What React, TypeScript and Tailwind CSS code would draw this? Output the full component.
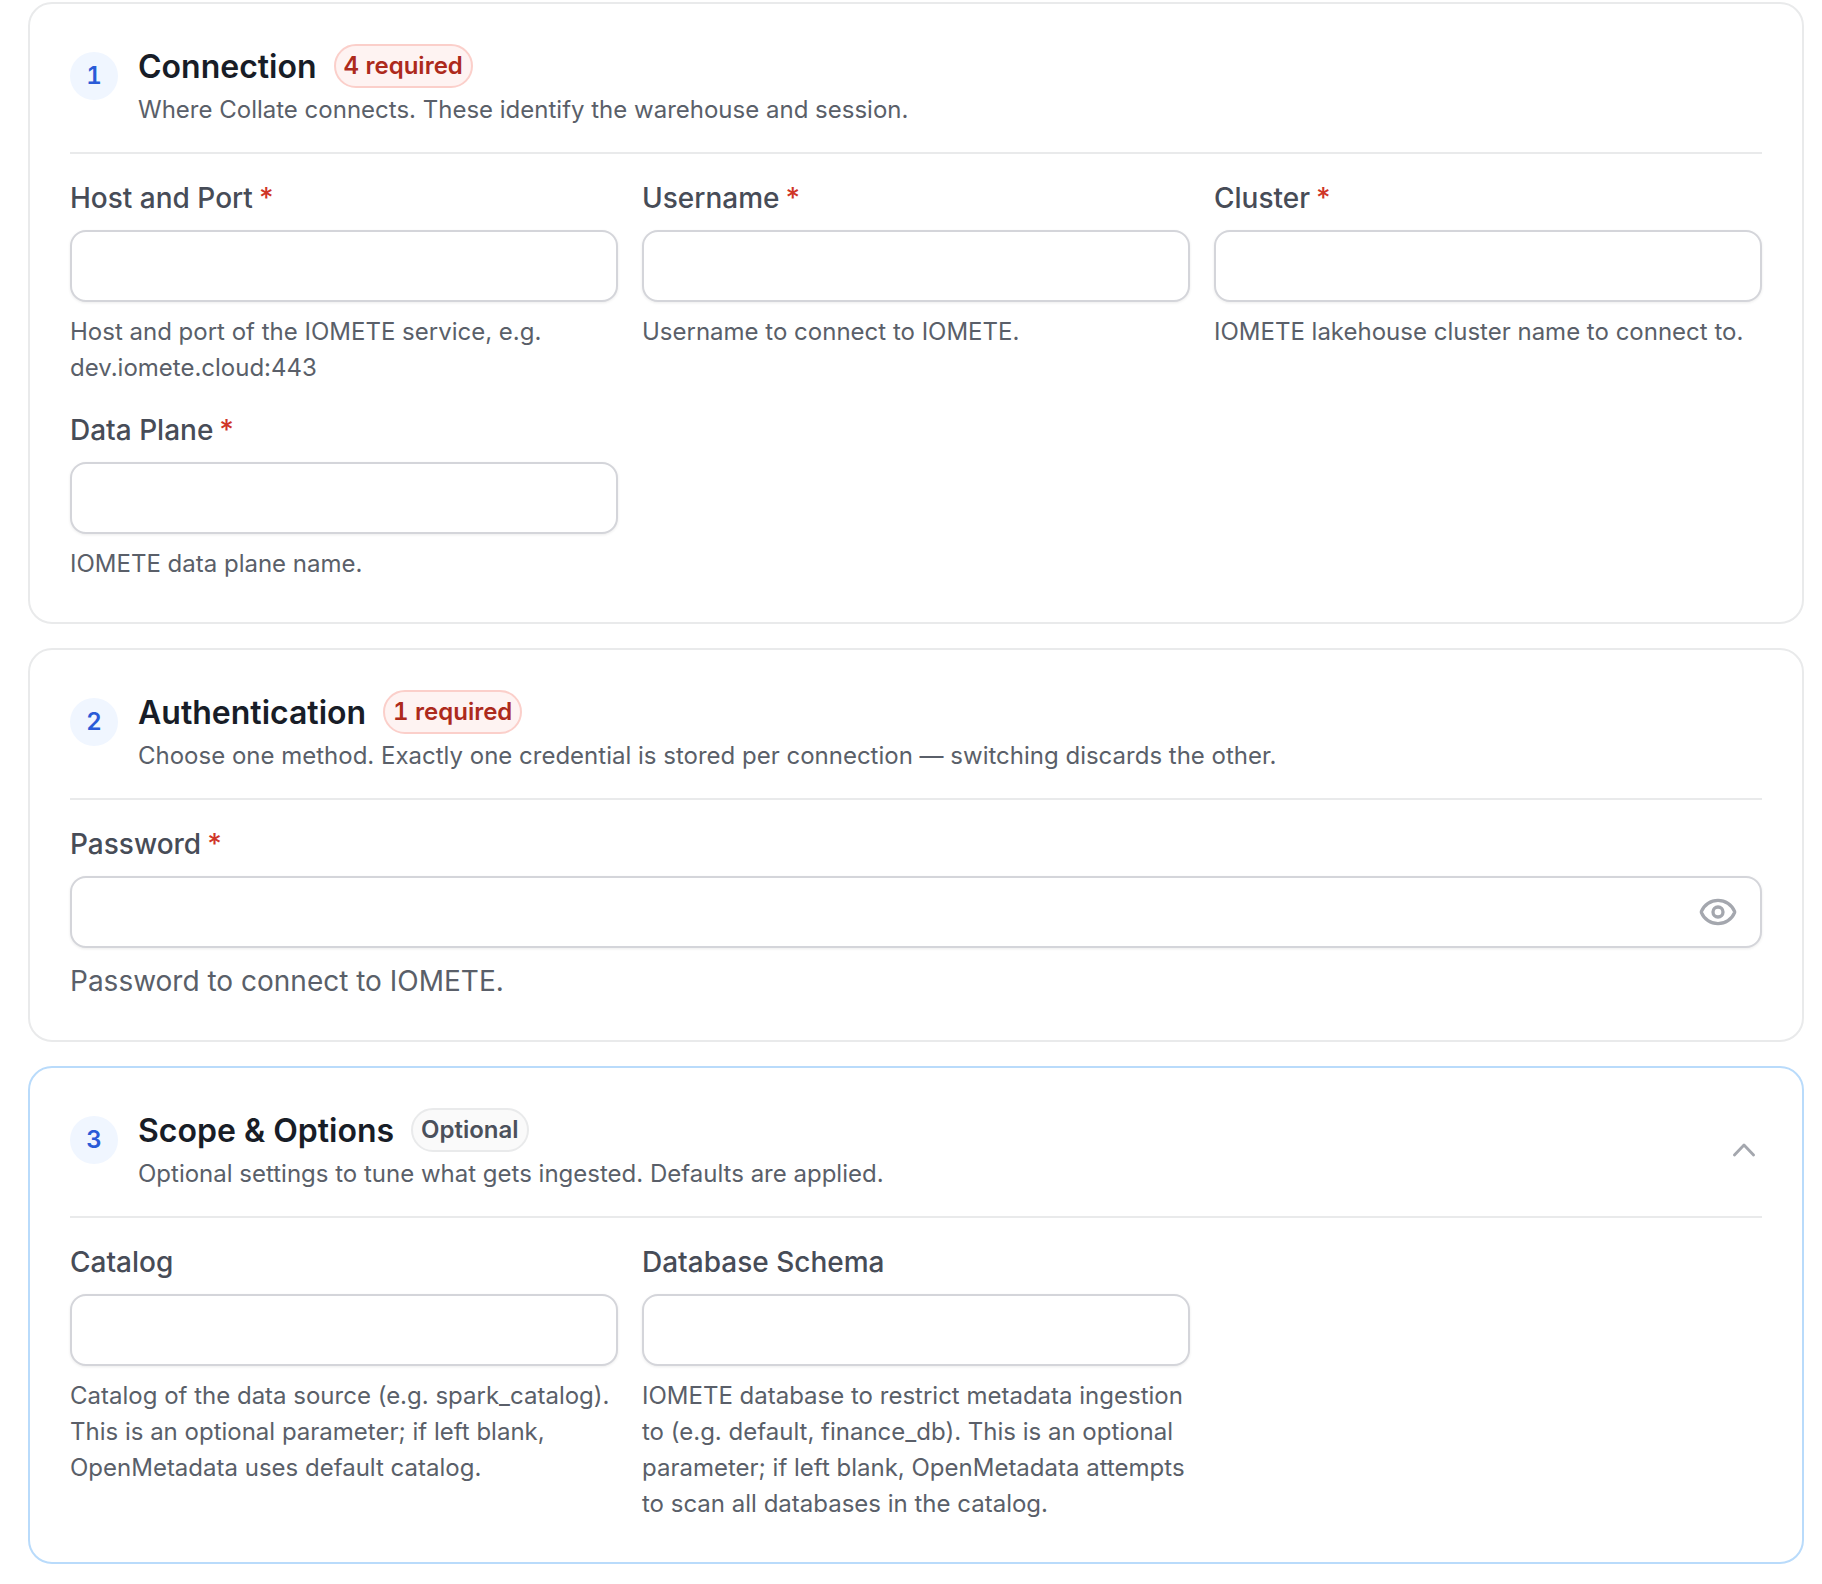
import React from "react";

const Badge = ({ text, optional }: { text: string; optional?: boolean }) => (
  <span
    className={
      optional
        ? "h-[44px] inline-flex items-center px-[8px] rounded-full border-2 border-[#e9eaeb] bg-[#fafafa] text-[#4b505b] text-[24px] leading-none font-semibold tabular-nums"
        : "h-[44px] inline-flex items-center px-[8px] rounded-full border-2 border-[#fbcfca] bg-[#fef3f2] text-[#ad2a1c] text-[24px] leading-none font-semibold tabular-nums"
    }
  >
    {text}
  </span>
);

const Header = ({
  n,
  title,
  desc,
  badge,
  optional,
  chevron,
}: {
  n: number;
  title: string;
  desc: string;
  badge: string;
  optional?: boolean;
  chevron?: boolean;
}) => (
  <div className="flex items-start gap-[20px] pb-[25px] border-b-2 border-[#e9eaeb]">
    <div className="w-[48px] h-[48px] mt-[8px] rounded-full bg-[#f0f6ff] flex items-center justify-center text-[#2a5bd7] text-[24px] font-semibold leading-none tabular-nums">
      {n}
    </div>
    <div className="flex-1">
      <div className="flex items-center gap-[17px] h-[44px]">
        <span className="mt-[2px] text-[#181d27] text-[32px] leading-none font-semibold">{title}</span>
        <Badge text={badge} optional={optional} />
      </div>
      <p className="mt-[5px] text-[#5a5f69] text-[24px] leading-[34px]">{desc}</p>
    </div>
    {chevron && (
      <svg viewBox="0 0 24 24" className="w-[34px] h-[34px] mt-[25px] mr-[1px] text-[#a4a7ae]" fill="none" stroke="currentColor" strokeWidth="2" strokeLinecap="round" strokeLinejoin="round">
        <path d="M5.25 15.5L12 8.5l6.75 7" />
      </svg>
    )}
  </div>
);

const Star = () => <span className="ml-[6px] text-[#cf3527]">*</span>;

const Field = ({ label, required, help }: { label: string; required?: boolean; help: string[] }) => (
  <div className="min-w-0">
    <div className="text-[#474c57] text-[28px] leading-[36px] font-medium">
      {label}
      {required && <Star />}
    </div>
    <div className="mt-[14px] h-[72px] rounded-[16px] border-2 border-[#d4d5da] bg-white shadow-[0_1px_3px_rgba(10,13,18,0.08)]" />
    <div className="mt-[12px] text-[#5a5f69] text-[24px] leading-[36px]">
      {help.map((h) => (
        <div key={h} className="whitespace-nowrap">{h}</div>
      ))}
    </div>
  </div>
);

export default function App() {
  return (
    <div className="w-[1822px] h-[1584px] bg-white pt-[2px] pl-[28px] pr-[18px] flex flex-col gap-[24px]" style={{ fontFamily: "Inter, 'Liberation Sans', sans-serif" }}>
      <section className="h-[622px] rounded-[24px] border-2 border-[#e9eaeb] bg-white px-[40px] pt-[40px]">
        <Header n={1} title="Connection" badge="4 required" desc="Where Collate connects. These identify the warehouse and session." />
        <div className="mt-[26px] grid grid-cols-3 gap-x-[24px] gap-y-[26px]">
          <Field label="Host and Port" required help={["Host and port of the IOMETE service, e.g.", "dev.iomete.cloud:443"]} />
          <Field label="Username" required help={["Username to connect to IOMETE."]} />
          <Field label="Cluster" required help={["IOMETE lakehouse cluster name to connect to."]} />
          <Field label="Data Plane" required help={["IOMETE data plane name."]} />
        </div>
      </section>
      <section className="h-[394px] rounded-[24px] border-2 border-[#e9eaeb] bg-white px-[40px] pt-[40px]">
        <Header n={2} title="Authentication" badge="1 required" desc="Choose one method. Exactly one credential is stored per connection — switching discards the other." />
        <div className="mt-[26px]">
          <div className="text-[#474c57] text-[28px] leading-[36px] font-medium">
            Password
            <Star />
          </div>
          <div className="mt-[14px] h-[72px] rounded-[16px] border-2 border-[#d4d5da] bg-white shadow-[0_1px_3px_rgba(10,13,18,0.08)] flex items-center justify-end pr-[22px]">
            <svg viewBox="0 0 24 24" className="w-[40px] h-[40px] text-[#a4a7ae]" fill="none" stroke="currentColor" strokeWidth="2" strokeLinecap="round" strokeLinejoin="round">
              <path d="M2.06 12.35a1 1 0 0 1 0-.7 10.75 10.75 0 0 1 19.88 0 1 1 0 0 1 0 .7 10.75 10.75 0 0 1-19.88 0" />
              <circle cx="12" cy="12" r="3" />
            </svg>
          </div>
          <div className="mt-[13px] text-[#5a5f69] text-[28px] leading-[40px]">Password to connect to IOMETE.</div>
        </div>
      </section>
      <section className="h-[498px] rounded-[24px] border-2 border-[#b9dbfb] bg-white px-[40px] pt-[40px]">
        <Header n={3} title="Scope & Options" badge="Optional" optional chevron desc="Optional settings to tune what gets ingested. Defaults are applied." />
        <div className="mt-[26px] grid grid-cols-3 gap-x-[24px]">
          <Field label="Catalog" help={["Catalog of the data source (e.g. spark_catalog).", "This is an optional parameter; if left blank,", "OpenMetadata uses default catalog."]} />
          <Field label="Database Schema" help={["IOMETE database to restrict metadata ingestion", "to (e.g. default, finance_db). This is an optional", "parameter; if left blank, OpenMetadata attempts", "to scan all databases in the catalog."]} />
        </div>
      </section>
    </div>
  );
}
